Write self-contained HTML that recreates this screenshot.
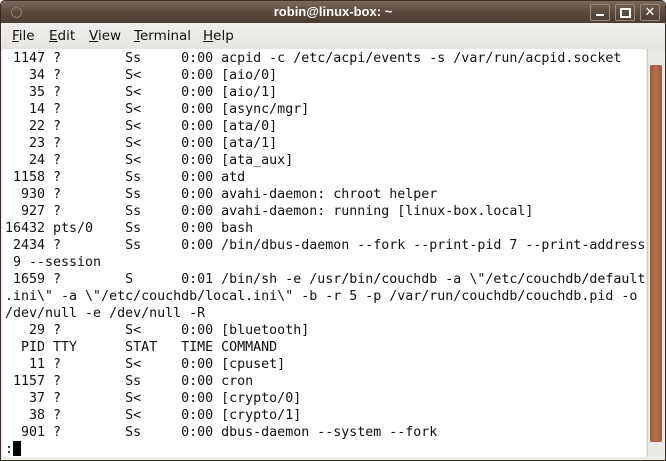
<!DOCTYPE html>
<html><head><style>
html,body{margin:0;padding:0;width:666px;height:461px;overflow:hidden;background:#fff;}
.win{position:absolute;left:0;top:0;width:664px;height:459px;border:1px solid #3a2e26;border-radius:5px 5px 0 0;background:#edeceb;overflow:hidden;}
.title{position:absolute;left:0;top:0;width:664px;height:22px;background:linear-gradient(#7a6a5d,#5a4a3f 50%,#4c3d33);color:#fff;font:bold 13px "Liberation Sans","DejaVu Sans",sans-serif;text-align:center;line-height:22px;}
.circ{position:absolute;left:10px;top:6px;width:9px;height:9px;border:1px solid #8d7d70;border-radius:50%;}
.btn{position:absolute;top:3px;width:18px;height:15px;border:1px solid #9a8a7d;border-radius:2px;background:linear-gradient(#6a5a4e,#4e3f35);}
.menu{position:absolute;left:0;top:22px;width:664px;height:26px;background:linear-gradient(#f0efed,#e6e4e0);border-bottom:1px solid #cfcac3;font:13.5px "DejaVu Sans","Liberation Sans",sans-serif;color:#111;}
.menu span{position:absolute;top:5px;}
.menu u{text-decoration:underline;}
.term{position:absolute;left:1px;top:48px;width:644px;height:408px;background:#fff;}
pre{margin:0;position:absolute;left:3px;top:1px;font:13.3px "DejaVu Sans Mono",monospace;line-height:17px;color:#111;}
.sb{position:absolute;left:646px;top:48px;width:16px;height:408px;background:#ebe9e6;border-left:1px solid #d0ccc6;}
.thumb{position:absolute;left:2px;top:16px;width:12px;height:377px;background:linear-gradient(90deg,#9a5a3e,#b86e4f,#9a5a3e);border-radius:2px;}
.cur{display:inline-block;width:8px;height:15px;background:#000;vertical-align:-3px;}
</style></head><body>
<div class="win">
<div class="title"><div class="circ"></div>robin@linux-box: ~
<div class="btn" style="left:589px"><div style="position:absolute;left:5px;top:9px;width:8px;height:2px;background:#fff"></div></div>
<div class="btn" style="left:614px"><div style="position:absolute;left:4px;top:3px;width:7px;height:6px;border:2px solid #fff"></div></div>
<div class="btn" style="left:639px;color:#fff;font:bold 13px 'DejaVu Sans';line-height:15px;text-align:center">✕</div>
</div>
<div class="menu">
<span style="left:11px"><u>F</u>ile</span>
<span style="left:48px"><u>E</u>dit</span>
<span style="left:88px"><u>V</u>iew</span>
<span style="left:133px"><u>T</u>erminal</span>
<span style="left:202px"><u>H</u>elp</span>
</div>
<div class="term"><pre> 1147 ?        Ss     0:00 acpid -c /etc/acpi/events -s /var/run/acpid.socket
   34 ?        S&lt;     0:00 [aio/0]
   35 ?        S&lt;     0:00 [aio/1]
   14 ?        S&lt;     0:00 [async/mgr]
   22 ?        S&lt;     0:00 [ata/0]
   23 ?        S&lt;     0:00 [ata/1]
   24 ?        S&lt;     0:00 [ata_aux]
 1158 ?        Ss     0:00 atd
  930 ?        Ss     0:00 avahi-daemon: chroot helper
  927 ?        Ss     0:00 avahi-daemon: running [linux-box.local]
16432 pts/0    Ss     0:00 bash
 2434 ?        Ss     0:00 /bin/dbus-daemon --fork --print-pid 7 --print-address
 9 --session
 1659 ?        S      0:01 /bin/sh -e /usr/bin/couchdb -a \"/etc/couchdb/default
.ini\" -a \"/etc/couchdb/local.ini\" -b -r 5 -p /var/run/couchdb/couchdb.pid -o
/dev/null -e /dev/null -R
   29 ?        S&lt;     0:00 [bluetooth]
  PID TTY      STAT   TIME COMMAND
   11 ?        S&lt;     0:00 [cpuset]
 1157 ?        Ss     0:00 cron
   37 ?        S&lt;     0:00 [crypto/0]
   38 ?        S&lt;     0:00 [crypto/1]
  901 ?        Ss     0:00 dbus-daemon --system --fork
:<span class="cur"></span></pre></div>
<div class="sb"><div class="thumb"></div></div>
</div>
</body></html>
